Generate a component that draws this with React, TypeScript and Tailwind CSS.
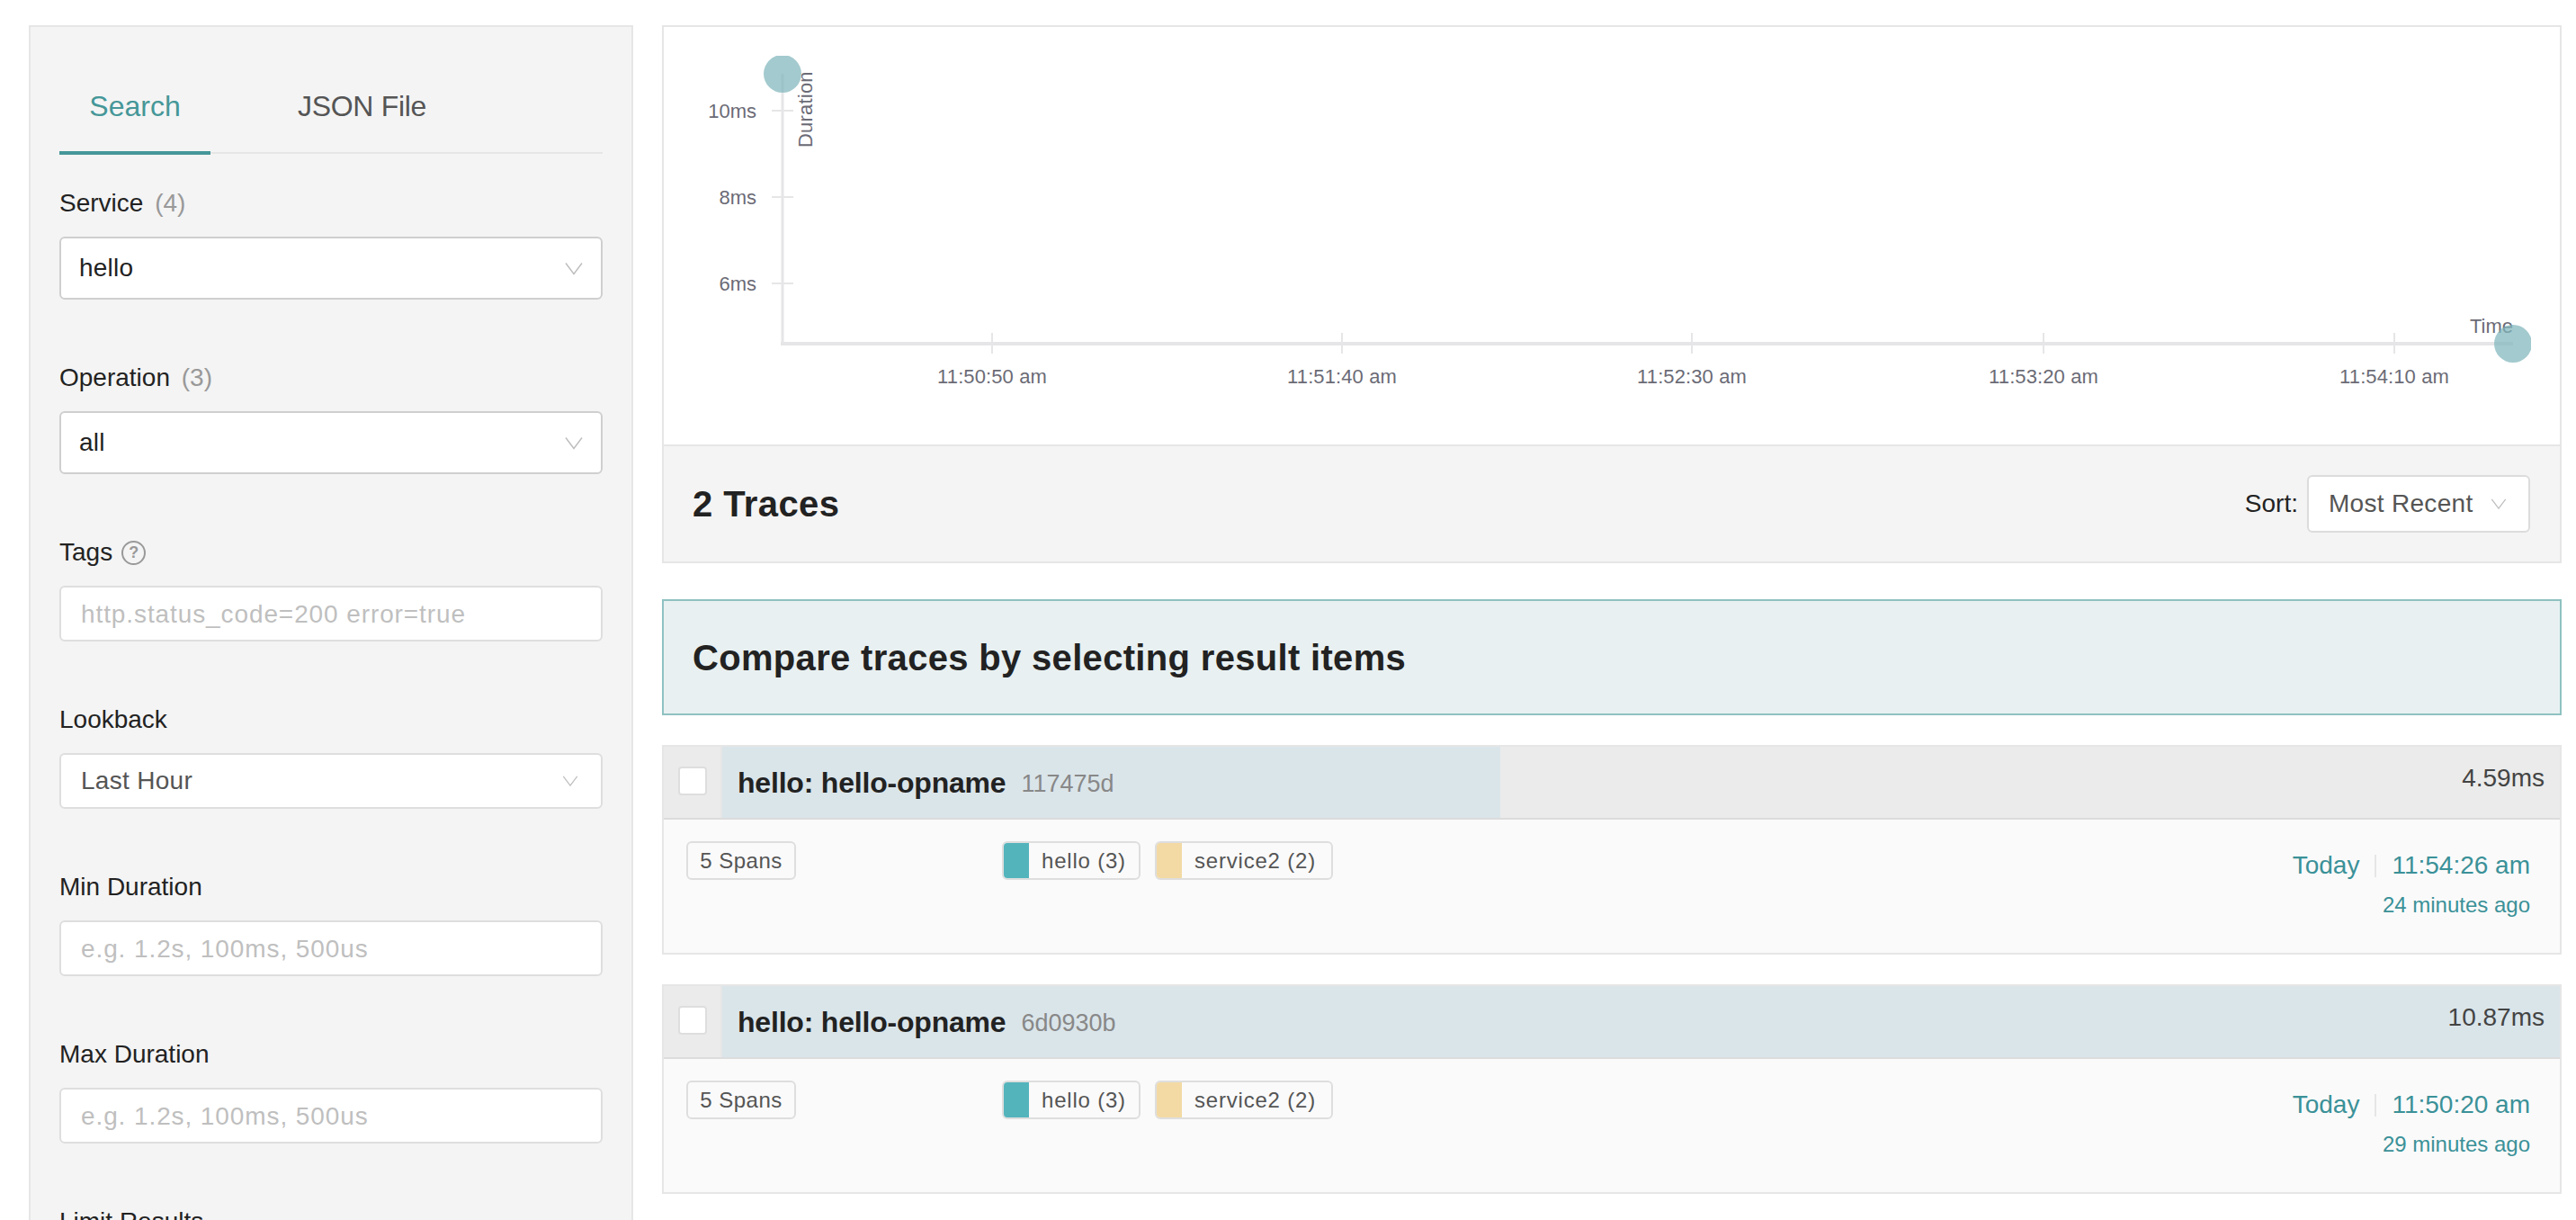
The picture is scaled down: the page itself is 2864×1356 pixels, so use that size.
import React from 'react';

const Chevron = ({ className }: { className: string }) => (
  <svg viewBox="0 0 20 14" fill="none" stroke="#bdbdbd" strokeWidth="1.4" className={className}>
    <polyline points="1,1 10,13 19,1" />
  </svg>
);

const FormGroup: React.FC<{ label: React.ReactNode; children: React.ReactNode }> = ({ label, children }) => (
  <div className="mt-[68px]">
    <div className="h-[40px] text-[28px] leading-[38px] text-[#222]">{label}</div>
    <div className="mt-[16px]">{children}</div>
  </div>
);

const BigSelect = ({ value }: { value: string }) => (
  <div className="flex h-[70px] items-center justify-between rounded-[6px] border-2 border-[#cfcfcf] bg-white pl-[20px] pr-[20px] text-[28px] tracking-[0.2px] text-[#222]">
    <span>{value}</span>
    <Chevron className="h-[15px] w-[20px]" />
  </div>
);

const SmallSelect = ({ value }: { value: string }) => (
  <div className="flex h-[62px] items-center justify-between rounded-[6px] border-2 border-[#dedede] bg-white pl-[22px] pr-[25px] text-[28px] tracking-[0.3px] text-[#555]">
    <span>{value}</span>
    <Chevron className="h-[12px] w-[18px]" />
  </div>
);

const TextField = ({ placeholder }: { placeholder: string }) => (
  <div className="flex h-[62px] items-center rounded-[6px] border-2 border-[#dedede] bg-white pl-[22px] pt-[1px] text-[28px] tracking-[0.9px] text-[#bfbfbf]">
    {placeholder}
  </div>
);

const Sidebar = () => (
  <aside className="ml-[32px] mt-[28px] h-[1400px] w-[672px] shrink-0 border-2 border-[#e6e6e6] bg-[#f4f4f4] px-[32px]">
    <div className="mt-[62px] flex border-b-2 border-[#e6e6e6]">
      <div className="-mb-[3px] h-[80px] w-[168px] border-b-4 border-[#459798] text-center text-[32px] leading-[52px] text-[#459798]">
        Search
      </div>
      <div className="ml-[64px] px-[33px] text-[32px] leading-[52px] tracking-[-0.3px] text-[#555]">JSON File</div>
    </div>
    <div className="-mt-[32px]">
      <FormGroup label={<>Service <span className="ml-[5px] text-[#999]">(4)</span></>}>
        <BigSelect value="hello" />
      </FormGroup>
      <FormGroup label={<>Operation <span className="ml-[5px] text-[#999]">(3)</span></>}>
        <BigSelect value="all" />
      </FormGroup>
      <FormGroup
        label={
          <span className="flex items-center gap-[10px]">
            Tags
            <span className="flex h-[27px] w-[27px] items-center justify-center rounded-full border-2 border-[#999] text-[18px] font-bold leading-none text-[#999]">
              ?
            </span>
          </span>
        }
      >
        <TextField placeholder="http.status_code=200 error=true" />
      </FormGroup>
      <FormGroup label="Lookback">
        <SmallSelect value="Last Hour" />
      </FormGroup>
      <FormGroup label="Min Duration">
        <TextField placeholder="e.g. 1.2s, 100ms, 500us" />
      </FormGroup>
      <FormGroup label="Max Duration">
        <TextField placeholder="e.g. 1.2s, 100ms, 500us" />
      </FormGroup>
      <FormGroup label="Limit Results">
        <TextField placeholder="20" />
      </FormGroup>
    </div>
  </aside>
);

const xTicks = [
  { x: 365, label: '11:50:50 am' },
  { x: 754, label: '11:51:40 am' },
  { x: 1143, label: '11:52:30 am' },
  { x: 1534, label: '11:53:20 am' },
  { x: 1924, label: '11:54:10 am' },
];

const yTicks = [
  { y: 93, label: '10ms' },
  { y: 189, label: '8ms' },
  { y: 285, label: '6ms' },
];

// origin of this svg is the inside of the panel border, page coords minus (738, 30)
const ScatterPlot = () => (
  <svg width="2108" height="464" className="block font-['Liberation_Sans',sans-serif]">
    <defs>
      <clipPath id="plotArea">
        <rect x="0" y="32" width="2076" height="432" />
      </clipPath>
    </defs>
    <g stroke="#e6e6e8" fill="none">
      <line x1="132" y1="52" x2="132" y2="352" strokeWidth="3" />
      <line x1="130" y1="352" x2="2056" y2="352" strokeWidth="4" />
      {yTicks.map((t) => (
        <line key={t.y} x1="120" y1={t.y} x2="144" y2={t.y} strokeWidth="2" />
      ))}
      {xTicks.map((t) => (
        <line key={t.x} x1={t.x} y1="340" x2={t.x} y2="363" strokeWidth="2" />
      ))}
    </g>
    <g fill="#6b6b76" fontSize="22">
      {yTicks.map((t) => (
        <text key={t.y} x="103" y={t.y + 8} textAnchor="end">{t.label}</text>
      ))}
      {xTicks.map((t) => (
        <text key={t.x} x={t.x} y="396" textAnchor="middle" letterSpacing="0.1">{t.label}</text>
      ))}
      <text x="2056" y="340" textAnchor="end">Time</text>
      <text transform="translate(165 134) rotate(-90)" letterSpacing="0.2">Duration</text>
    </g>
    <g clipPath="url(#plotArea)" fill="#7fb5bb" fillOpacity="0.72">
      <circle cx="132" cy="52" r="21" />
      <circle cx="2056" cy="352" r="21" />
    </g>
  </svg>
);

const TagChip = ({ color, label, className }: { color: string; label: string; className: string }) => (
  <div className={`flex h-[43px] overflow-hidden rounded-[6px] border-2 border-[#dedede] bg-[#fafafa] ${className}`}>
    <span className={`-my-[2px] -ml-[2px] w-[30px] shrink-0 ${color}`} />
    <span className="whitespace-nowrap pl-[14px] text-[24px] leading-[39px] tracking-[0.8px] text-[#555]">{label}</span>
  </div>
);

const TraceCard: React.FC<{
  id: string;
  duration: string;
  barClass: string;
  time: string;
  ago: string;
}> = ({ id, duration, barClass, time, ago }) => (
  <div className="mt-[33px] h-[233px] border-2 border-[#e6e6e6] bg-[#fafafa]">
    <div className="relative flex h-[81px] border-b-2 border-[#dcdcdc] bg-[#ebebeb]">
      <div className="flex w-[65px] shrink-0 items-center justify-center border-r-2 border-[#e6e6e6] pb-[3px]">
        <span className="h-[32px] w-[32px] rounded-[4px] border-2 border-[#dedede] bg-white" />
      </div>
      <div className={`flex items-center bg-[#dae5ea] pl-[17px] ${barClass}`}>
        <span className="whitespace-nowrap text-[32px] font-bold tracking-[-0.2px] text-[#222]">hello: hello-opname</span>
        <span className="ml-[17px] mt-[4px] text-[27px] text-[#888]">{id}</span>
      </div>
      <span className="absolute right-[17px] top-[14px] text-[28px] text-[#444]">{duration}</span>
    </div>
    <div className="flex justify-between pl-[25px] pr-[33px] pt-[24px]">
      <div className="flex">
        <div className="h-[43px] w-[122px] rounded-[6px] border-2 border-[#dedede] text-center text-[24px] leading-[39px] tracking-[0.5px] text-[#555]">
          5 Spans
        </div>
        <TagChip color="bg-[#54b4bc]" label="hello (3)" className="ml-[229px] w-[154px]" />
        <TagChip color="bg-[#f3d9a4]" label="service2 (2)" className="ml-[16px] w-[198px]" />
      </div>
      <div className="flex flex-col items-end text-[#3b9198]">
        <div className="mt-[11px] flex h-[32px] items-center text-[28px] leading-[32px]">
          <span>Today</span>
          <span className="mx-[17px] h-[25px] w-[2px] bg-[#e6e6e6]" />
          <span>{time}</span>
        </div>
        <div className="mt-[14px] text-[24px] leading-[28px]">{ago}</div>
      </div>
    </div>
  </div>
);

export default function App() {
  return (
    <div className="flex h-[1356px] overflow-hidden bg-white font-['Liberation_Sans',Arial,sans-serif]">
      <Sidebar />
      <main className="ml-[32px] mt-[28px] w-[2112px] shrink-0">
        <section className="h-[598px] border-2 border-[#e6e6e6]">
          <ScatterPlot />
          <div className="flex h-[130px] items-center justify-between border-t-2 border-[#e6e6e6] bg-[#f4f4f4] pl-[32px] pr-[33px]">
            <h2 className="text-[40px] font-bold tracking-[0.4px] text-[#222]">2 Traces</h2>
            <div className="flex items-center">
              <span className="text-[28px] text-[#222]">Sort:</span>
              <div className="ml-[10px] flex h-[64px] w-[248px] items-center justify-between rounded-[6px] border-2 border-[#dcdcdc] bg-white pl-[22px] pr-[24px] text-[28px] tracking-[0.3px] text-[#555]">
                <span>Most Recent</span>
                <Chevron className="h-[12px] w-[18px]" />
              </div>
            </div>
          </div>
        </section>
        <section className="mt-[40px] flex h-[129px] items-center border-2 border-[#8fc1c1] bg-[#e8f0f1] pl-[32px]">
          <h2 className="text-[40px] font-bold tracking-[0.32px] text-[#222]">Compare traces by selecting result items</h2>
        </section>
        <TraceCard
          id="117475d"
          duration="4.59ms"
          barClass="w-[865px]"
          time="11:54:26 am"
          ago="24 minutes ago"
        />
        <TraceCard
          id="6d0930b"
          duration="10.87ms"
          barClass="flex-1"
          time="11:50:20 am"
          ago="29 minutes ago"
        />
      </main>
    </div>
  );
}
